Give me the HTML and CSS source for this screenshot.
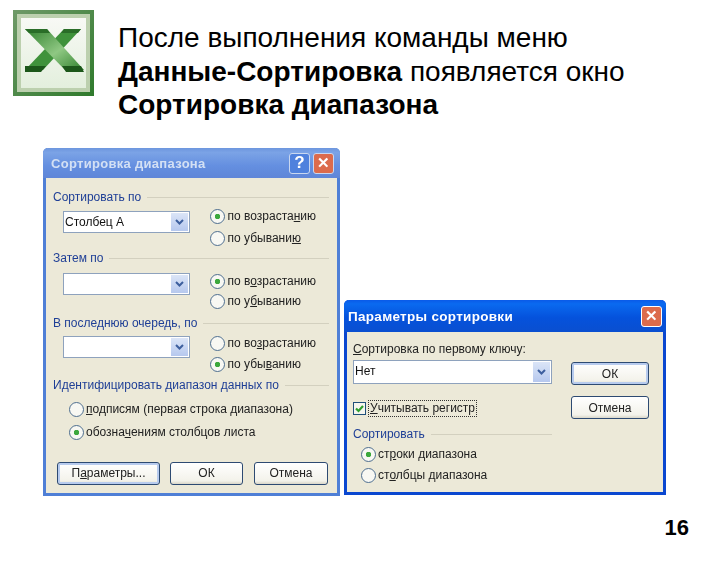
FILE: index.html
```html
<!DOCTYPE html>
<html lang="ru">
<head>
<meta charset="utf-8">
<title>Сортировка диапазона</title>
<link rel="stylesheet" href="styles.css">
</head>
<body>
<main class="slide">
  <svg class="logo" viewBox="0 0 81 86" aria-label="Excel">
    <defs>
      <linearGradient id="frame" x1="0" y1="0" x2="1" y2="1">
        <stop offset="0" stop-color="#6f9a68"/><stop offset="1" stop-color="#2f7a2c"/>
      </linearGradient>
      <linearGradient id="paper" x1="0" y1="0" x2="0" y2="1">
        <stop offset="0" stop-color="#f8f9f5"/><stop offset="1" stop-color="#e3efdd"/>
      </linearGradient>
      <linearGradient id="stroke" x1="0" y1="0" x2="1" y2="1">
        <stop offset="0" stop-color="#2f7f2c"/><stop offset=".55" stop-color="#8fc883"/><stop offset="1" stop-color="#2f802c"/>
      </linearGradient>
    </defs>
    <rect width="81" height="86" fill="url(#frame)"/>
    <rect x="4" y="4" width="73" height="78" fill="#bcd0ae"/>
    <rect x="8" y="8" width="65" height="70" fill="url(#paper)"/>
    <path d="M51 19H68L30 60H12Z" fill="#3f923b"/>
    <path d="M12 19H34L71 60H52Z" fill="url(#stroke)"/>
    <path d="M12 56H33L28 62H12ZM49 56H68L71 62H53Z" fill="#1c571a"/>
    <path d="M12 19H34L37 23H16ZM51 19H68L65 23H48Z" fill="#2a6d28"/>
  </svg>

  <h1 class="heading">После выполнения команды меню<br><b>Данные-Сортировка</b> появляется окно<br><b>Сортировка диапазона</b></h1>

  <section class="dialog dialog-range">
    <header class="titlebar titlebar-faded">
      <span class="title">Сортировка диапазона</span>
      <span class="winbtn help">?</span>
      <span class="winbtn close">✕</span>
    </header>
    <div class="body">
      <div class="group-title"><span>Сортировать по</span><i></i></div>
      <div class="sort-row row-first">
        <div class="select"><span class="value">Столбец А</span><span class="arrow"><svg viewBox="0 0 9 6"><path d="M1 1l3.500 3.500L8 1" fill="none" stroke="#3d5f9e" stroke-width="2"/></svg></span></div>
        <div class="radios">
          <label class="radio on"><span>по возраста<u>н</u>ию</span></label>
          <label class="radio"><span>по убывани<u>ю</u></span></label>
        </div>
      </div>
      <div class="group-title"><span>Затем по</span><i></i></div>
      <div class="sort-row row-second">
        <div class="select"><span class="value"></span><span class="arrow"><svg viewBox="0 0 9 6"><path d="M1 1l3.500 3.500L8 1" fill="none" stroke="#3d5f9e" stroke-width="2"/></svg></span></div>
        <div class="radios">
          <label class="radio on"><span>по в<u>о</u>зрастанию</span></label>
          <label class="radio"><span>по у<u>б</u>ыванию</span></label>
        </div>
      </div>
      <div class="group-title"><span>В последнюю очередь, по</span><i></i></div>
      <div class="sort-row row-third">
        <div class="select"><span class="value"></span><span class="arrow"><svg viewBox="0 0 9 6"><path d="M1 1l3.500 3.500L8 1" fill="none" stroke="#3d5f9e" stroke-width="2"/></svg></span></div>
        <div class="radios">
          <label class="radio"><span>по во<u>з</u>растанию</span></label>
          <label class="radio on"><span>по убы<u>в</u>анию</span></label>
        </div>
      </div>
      <div class="group-title"><span>Идентифицировать диапазон данных по</span><i></i></div>
      <div class="radios id-radios">
        <label class="radio"><span><u>п</u>одписям (первая строка диапазона)</span></label>
        <label class="radio on"><span>обозна<u>ч</u>ениям столбцов листа</span></label>
      </div>
      <div class="buttons">
        <button class="btn btn-default btn-params">П<u>а</u>раметры...</button>
        <button class="btn btn-ok">ОК</button>
        <button class="btn btn-cancel">Отмена</button>
      </div>
    </div>
  </section>

  <section class="dialog dialog-params">
    <header class="titlebar">
      <span class="title">Параметры сортировки</span>
      <span class="winbtn close">✕</span>
    </header>
    <div class="body params-body">
      <div class="params-main">
        <div class="field-label"><u>С</u>ортировка по первому ключу:</div>
        <div class="select select-wide"><span class="value">Нет</span><span class="arrow"><svg viewBox="0 0 9 6"><path d="M1 1l3.500 3.500L8 1" fill="none" stroke="#3d5f9e" stroke-width="2"/></svg></span></div>
        <label class="check"><span class="box"><svg viewBox="0 0 11 11"><path d="M2 5.500l2.500 2.500L9 3" fill="none" stroke="#2f9e2f" stroke-width="2.200"/></svg></span><span class="focus"><u>У</u>читывать регистр</span></label>
        <div class="group-title"><span>Сортировать</span><i></i></div>
        <div class="radios params-radios">
          <label class="radio on"><span>ст<u>р</u>оки диапазона</span></label>
          <label class="radio"><span>ст<u>о</u>лбцы диапазона</span></label>
        </div>
      </div>
      <div class="params-side">
        <button class="btn btn-default btn-side">ОК</button>
        <button class="btn btn-side">Отмена</button>
      </div>
    </div>
  </section>

  <div class="page-num">16</div>
</main>
</body>
</html>
```

FILE: styles.css
```css
* { box-sizing: border-box; }
html, body { margin: 0; padding: 0; background: #fff; }
.slide {
  position: relative;
  width: 720px;
  height: 567px;
  overflow: hidden;
  font-family: "Liberation Sans", Arial, sans-serif;
  color: #000;
}
.logo { position: absolute; left: 13px; top: 10px; width: 81px; height: 86px; }
.heading {
  position: absolute;
  left: 118px;
  top: 21px;
  margin: 0;
  font-size: 28px;
  line-height: 33.500px;
  font-weight: 400;
  white-space: nowrap;
}
.page-num {
  position: absolute;
  right: 31px;
  top: 515px;
  font-size: 22px;
  font-weight: 700;
}

.dialog {
  position: absolute;
  display: flex;
  flex-direction: column;
  background: #ece9d8;
  border: 3px solid #0f4fd8;
  border-top: 0;
  border-radius: 5px 5px 0 0;
  font-size: 12px;
  color: #222;
  filter: blur(.35px);
}
.dialog-range { left: 43px; top: 148px; width: 297px; height: 348px; border-color: #4f7fd6; }
.dialog-params { left: 344px; top: 300px; width: 322px; height: 195px; border-color: #0a47d0; }

.titlebar {
  display: flex;
  align-items: center;
  gap: 3px;
  margin: 0 -3px;
  padding: 0 6px 0 8px;
  height: 30px;
  flex: none;
  border-radius: 5px 5px 0 0;
  background: linear-gradient(#0a5ae8 0, #0a6af0 12%, #0552dc 55%, #0a4fd0 100%);
  color: #fff;
}
.titlebar-faded { background: linear-gradient(#6d96de 0, #7ba3e6 15%, #648fe0 60%, #5f86d8 100%); }
.titlebar-faded .title { color: #d3e0f4; }
.titlebar-faded .winbtn { border-color: #c9d7f0; }
.dialog-params .titlebar { height: 32px; padding: 0 4px; }
.dialog-params .title { font-size: 13.500px; }
.title { flex: 1; font-size: 13px; font-weight: 700; letter-spacing: .3px; white-space: nowrap; }
.winbtn {
  display: flex;
  align-items: center;
  justify-content: center;
  width: 21px;
  height: 21px;
  border: 1px solid #fff;
  border-radius: 3px;
  color: #fff;
  font-size: 15px;
  font-weight: 700;
}
.help { background: #4f81dd; font-size: 17px; }
.close { background: #dc6b4c; }

.body { display: flex; flex-direction: column; flex: 1; padding: 11px 8px 0 7px; }
.group-title {
  display: flex;
  align-items: center;
  gap: 6px;
  height: 16px;
  flex: none;
  color: #1f3f96;
  white-space: nowrap;
}
.group-title i { flex: 1; height: 1px; background: #d3d0bf; }

.sort-row { display: flex; align-items: flex-start; gap: 20px; padding-left: 10px; flex: none; }
.row-first { height: 45px; }
.row-first .select { margin-top: 6px; }
.row-first .radios { margin-top: 3.500px; gap: 7px; }
.row-second { height: 49px; }
.row-second .select { margin-top: 7px; }
.row-second .radios { margin-top: 7.500px; gap: 5px; }
.row-third { height: 46px; }
.row-third .select { margin-top: 5px; }
.row-third .radios { margin-top: 4.500px; gap: 6px; }

.select {
  display: flex;
  align-items: stretch;
  width: 127px;
  height: 22px;
  flex: none;
  background: #fff;
  border: 1px solid #8ea2bd;
  padding: 1px;
}
.value { flex: 1; line-height: 18px; color: #111; }
.arrow {
  display: flex;
  align-items: center;
  justify-content: center;
  width: 17px;
  background: linear-gradient(#dbe5f7, #b6c8ee);
}
.arrow svg { width: 9px; height: 6px; }

.radios { display: flex; flex-direction: column; }
.radio { display: flex; align-items: center; gap: 2.500px; height: 15px; white-space: nowrap; }
.radio::before {
  content: "";
  width: 13px;
  height: 13px;
  flex: none;
  border: 1px solid #4f6f90;
  border-radius: 50%;
  background: #f8f8f3;
}
.radio.on::before { background: radial-gradient(circle, #3da83d 0 2.500px, #f8f8f3 3px); }

.id-radios { gap: 8px; margin: 8.500px 0 0 15.500px; }
.buttons { display: flex; margin: 22px 0 0 4px; }
.btn {
  height: 23px;
  padding: 0;
  border: 1px solid #2d4a72;
  border-radius: 3px;
  background: linear-gradient(#fff, #f3f2ea 85%, #d9d6c8);
  font: inherit;
  color: #222;
}
.btn-default { box-shadow: inset 0 0 0 2px #b7cbee; }
.btn-params { width: 103px; margin-right: 10px; }
.btn-ok { width: 73px; margin-right: 11px; }
.btn-cancel { width: 74px; }

.params-body { flex-direction: row; gap: 19px; padding: 10px 14px 0 6px; }
.params-main { display: flex; flex-direction: column; width: 199px; }
.field-label { height: 16px; line-height: 15px; white-space: nowrap; flex: none; }
.select-wide { width: 199px; height: 24px; margin-top: 2px; }
.check { display: flex; align-items: center; gap: 3px; margin-top: 16px; height: 16px; flex: none; }
.box { width: 13px; height: 13px; border: 1px solid #1f4f7a; background: #f5f5ee; display: flex; }
.box svg { width: 11px; height: 11px; }
.focus { outline: 1px dotted #333; padding: 0 1px; line-height: 15px; white-space: nowrap; }
.params-main .group-title { margin-top: 10px; }
.params-radios { gap: 6px; margin: 4.500px 0 0 7.500px; }
.params-side { display: flex; flex-direction: column; gap: 11px; padding-top: 20px; }
.btn-side { width: 78px; }
```
